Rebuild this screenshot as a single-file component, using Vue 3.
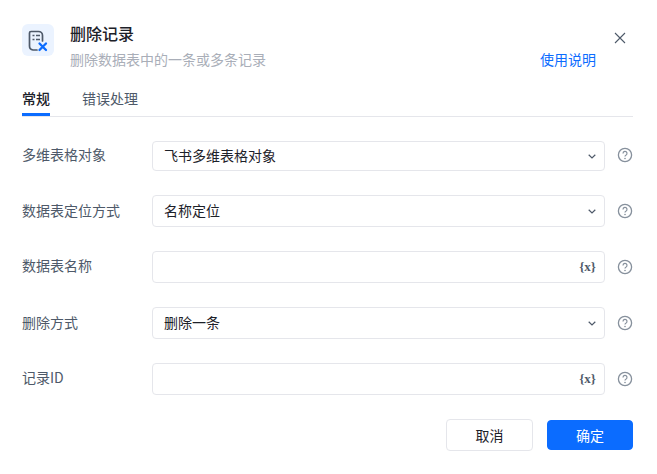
<template>
  <div class="dialog">
    <div class="dialog-head">
      <div class="head-icon">
        <svg width="32" height="32" viewBox="0 0 32 32" fill="none">
          <path d="M15 26H11A4 4 0 0 1 7.500 22V9A1.500 1.500 0 0 1 9 7.500H16.500A4 4 0 0 1 20.500 11.500V17" stroke="#4e5969" stroke-width="1.700" stroke-linecap="round" />
          <path d="M10.500 11.500h2M14 11.500h4M10.500 15.500h2M14 15.500h4" stroke="#4e5969" stroke-width="1.500" />
          <path d="M17.500 19.500l6.500 6.500M24 19.500L17.500 26" stroke="#0b6cff" stroke-width="2.300" stroke-linecap="round" />
        </svg>
      </div>
      <div class="head-text">
        <div class="title">删除记录</div>
        <div class="subtitle">删除数据表中的一条或多条记录</div>
      </div>
      <a class="help-link">使用说明</a>
      <svg class="close" width="12" height="12" viewBox="0 0 12 12" fill="none">
        <path d="M1 1l10 10M11 1L1 11" stroke="#4e5969" stroke-width="1.100" />
      </svg>
    </div>

    <div class="tabs">
      <div class="tab active">常规</div>
      <div class="tab">错误处理</div>
    </div>

    <div class="form">
      <div v-for="row in rows" :key="row.label" class="row">
        <label class="row-label">{{ row.label }}</label>
        <div class="field">
          <span class="field-value">{{ row.value }}</span>
          <svg v-if="row.type === 'select'" class="chevron" width="8" height="5" viewBox="0 0 8 5" fill="none">
            <path d="M0.700 0.800L4 4l3.300-3.200" stroke="#4e5969" stroke-width="1.200" />
          </svg>
          <span v-else class="var-icon">{x}</span>
        </div>
        <svg class="hint" width="16" height="16" viewBox="0 0 16 16" fill="none">
          <circle cx="8" cy="8" r="6.600" stroke="#86909c" stroke-width="1.300" />
          <path d="M6 6.400A2 2 0 1 1 8.900 8.200C8.300 8.500 8 8.900 8 9.600" stroke="#86909c" stroke-width="1.200" />
          <circle cx="8" cy="11.500" r="0.800" fill="#86909c" />
        </svg>
      </div>
    </div>

    <div class="dialog-foot">
      <button class="btn">取消</button>
      <button class="btn btn-primary">确定</button>
    </div>
  </div>
</template>

<script setup>
const rows = [
  { label: '多维表格对象', value: '飞书多维表格对象', type: 'select' },
  { label: '数据表定位方式', value: '名称定位', type: 'select' },
  { label: '数据表名称', value: '', type: 'var' },
  { label: '删除方式', value: '删除一条', type: 'select' },
  { label: '记录ID', value: '', type: 'var' },
];
</script>

<style>
html, body {
  margin: 0;
  background: #fff;
}
</style>

<style scoped>
.dialog {
  width: 657px;
  height: 474px;
  box-sizing: border-box;
  padding: 24px 24px 0 22px;
  background: #fff;
  font-family: "Noto Sans CJK SC", "Liberation Sans", sans-serif;
  color: #1d2129;
  overflow: hidden;
}

.dialog-head {
  display: flex;
  align-items: flex-start;
  height: 54px;
}

.head-icon {
  width: 32px;
  height: 32px;
  border-radius: 6px;
  background: #ebf3ff;
  margin-right: 16px;
}

.head-text {
  flex: 1;
  margin-top: -1px;
}

.title {
  font-size: 16px;
  font-weight: 500;
  line-height: 20px;
  color: #1d2129;
}

.subtitle {
  font-size: 14px;
  line-height: 20px;
  margin-top: 6px;
  color: #a9aeb8;
}

.help-link {
  font-size: 14px;
  line-height: 20px;
  margin-top: 25px;
  margin-right: 18px;
  color: #0b6cff;
}

.close {
  margin-top: 8px;
  margin-right: 7px;
}

.tabs {
  display: flex;
  gap: 32px;
  height: 39px;
  box-sizing: border-box;
  border-bottom: 1px solid #e5e6eb;
}

.tab {
  font-size: 14px;
  line-height: 20px;
  padding-top: 10px;
  height: 38px;
  box-sizing: border-box;
  color: #4e5969;
}

.tab.active {
  font-weight: 500;
  color: #1d2129;
  border-bottom: 3px solid #0b6cff;
}

.form {
  margin-top: 24px;
  display: flex;
  flex-direction: column;
  gap: 24px;
}

.row {
  display: flex;
  align-items: center;
  height: 32px;
}

.row:first-child {
  height: 30px;
}

.row-label {
  width: 130px;
  font-size: 14px;
  line-height: 20px;
  padding-bottom: 2px;
  color: #4e5969;
}

.row:nth-child(odd) .row-label {
  padding-bottom: 4px;
}

.field {
  width: 453px;
  height: 100%;
  box-sizing: border-box;
  border: 1px solid #e5e6eb;
  border-radius: 4px;
  display: flex;
  align-items: center;
  justify-content: space-between;
  padding: 0 8px 0 11px;
}

.field-value {
  font-size: 14px;
  line-height: 20px;
  padding-bottom: 2px;
  color: #1d2129;
}

.var-icon {
  font-family: "Liberation Serif", serif;
  font-size: 13px;
  font-weight: 700;
  line-height: 14px;
  color: #4e5969;
}

.hint {
  margin-left: 12px;
}

.row:first-child .hint {
  margin-bottom: 2px;
}

.dialog-foot {
  display: flex;
  align-items: center;
  justify-content: flex-end;
  gap: 14px;
  margin-top: 24px;
}

.btn {
  width: 87px;
  height: 32px;
  box-sizing: border-box;
  border: 1px solid #e5e6eb;
  border-radius: 4px;
  background: #fff;
  font-family: inherit;
  font-size: 14px;
  color: #1d2129;
}

.btn-primary {
  width: 86px;
  height: 30px;
  border-color: #0b6cff;
  background: #0b6cff;
  color: #fff;
}
</style>
